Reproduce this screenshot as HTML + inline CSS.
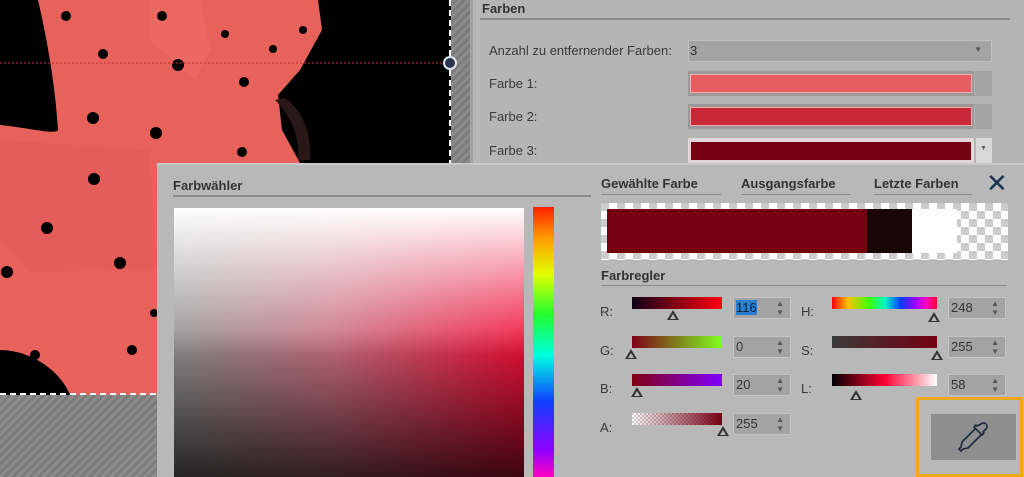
<!DOCTYPE html>
<html><head><meta charset="utf-8"><style>
*{margin:0;padding:0;box-sizing:border-box}
body{width:1024px;height:477px;overflow:hidden;position:relative;background:#b8b8b8;font-family:"Liberation Sans","DejaVu Sans",sans-serif;color:#333}
.a{position:absolute}
.hatch{background:repeating-linear-gradient(135deg,#8c8c8c 0 3px,#7c7c7c 3px 6px)}
.lbl{font-size:13px;color:#3a3a3a}
.b{font-weight:bold;font-size:13px;color:#333}
.ul{height:2px;background:#8a8a8a}
.spin{background:#a3a3a3;border:1px solid #c4c4c4;font-size:13px;color:#333;padding:2px 2px;width:58px;height:22px}
.spin i{position:absolute;right:6px;top:1px;font-style:normal;font-size:8px;line-height:9px;color:#555}
.tri{position:absolute;width:0;height:0;border-left:6px solid transparent;border-right:6px solid transparent;border-bottom:10px solid #333}
.tri:after{content:"";position:absolute;left:-3px;top:4px;border-left:3px solid transparent;border-right:3px solid transparent;border-bottom:5px solid #b8b8b8}
.sl{position:absolute;height:12px}
</style></head><body>
<div class="a hatch" style="left:0;top:0;width:470px;height:477px"></div>
<svg class="a" style="left:0;top:0" width="451" height="395" viewBox="0 0 451 395">
<rect width="451" height="395" fill="#000"/>
<path d="M38 0 L318 0 L322 30 L300 70 L278 95 L282 130 L300 163 L157 163 L157 395 L70 395 C60 370 30 350 0 350 L0 125 C30 128 55 135 58 130 C55 80 45 30 38 0Z" fill="#e8625c"/>
<path d="M150 0 L200 0 L210 50 L195 80 L150 40Z" fill="#ee6e66" opacity=".6"/>
<path d="M0 140 L150 150 L157 270 L30 272 L0 240Z" fill="#e25a55" opacity=".6"/>
<path d="M275 100 C290 115 300 135 298 160 L310 160 C312 130 300 108 285 98Z" fill="#2a1818"/>
<g fill="#000">
<circle cx="66" cy="16" r="5"/><circle cx="162" cy="16" r="5"/><circle cx="103" cy="54" r="5"/><circle cx="178" cy="65" r="6"/><circle cx="244" cy="82" r="5"/><circle cx="225" cy="34" r="4"/><circle cx="273" cy="49" r="4"/><circle cx="303" cy="30" r="4"/><circle cx="93" cy="118" r="6"/><circle cx="156" cy="133" r="6"/><circle cx="242" cy="152" r="5"/><circle cx="94" cy="179" r="6"/><circle cx="47" cy="228" r="6"/><circle cx="120" cy="263" r="6"/><circle cx="7" cy="272" r="6"/><circle cx="35" cy="355" r="5"/><circle cx="132" cy="350" r="5"/><circle cx="154" cy="313" r="4"/></g>
<line x1="0" y1="63" x2="450" y2="63" stroke="#c03030" stroke-dasharray="2 2" stroke-width="1"/>
<line x1="450" y1="0" x2="450" y2="395" stroke="#fff" stroke-dasharray="6 4" stroke-width="2"/>
<line x1="0" y1="394" x2="157" y2="394" stroke="#fff" stroke-dasharray="6 4" stroke-width="2"/>
</svg>
<div class="a" style="left:443px;top:56px;width:14px;height:14px;border-radius:50%;background:#2c3550;border:2px solid #e0e4ea"></div>
<div class="a" style="left:470px;top:0;width:554px;height:163px;background:#b5b5b5;border-left:3px solid #a0a0a0"></div>
<div class="a b" style="left:482px;top:1px">Farben</div>
<div class="a ul" style="left:480px;top:18px;width:530px"></div>
<div class="a lbl" style="left:489px;top:43px">Anzahl zu entfernender Farben:</div>
<div class="a" style="left:688px;top:40px;width:304px;height:22px;background:#a4a4a4;border:1px solid #c2c2c2;font-size:13px;padding:2px 1px">3<span class="a" style="right:9px;top:4px;font-size:8px;color:#555">▼</span></div>
<div class="a lbl" style="left:489px;top:76px">Farbe 1:</div>
<div class="a" style="left:688px;top:71px;width:286px;height:25px;background:#999;padding:3px 2px"><div style="height:19px;background:#e85d5f;border:1px solid #f0b0b0"></div></div>
<div class="a" style="left:975px;top:71px;width:17px;height:25px;background:#a2a2a2"></div>
<div class="a lbl" style="left:489px;top:109px">Farbe 2:</div>
<div class="a" style="left:688px;top:104px;width:286px;height:25px;background:#999;padding:3px 2px"><div style="height:19px;background:#c82838;border:1px solid #f0b0b0"></div></div>
<div class="a" style="left:975px;top:104px;width:17px;height:25px;background:#a2a2a2"></div>
<div class="a lbl" style="left:489px;top:143px">Farbe 3:</div>
<div class="a" style="left:688px;top:138px;width:286px;height:25px;background:#e0d8d8;padding:4px 3px"><div style="height:18px;background:#740010"></div></div>
<div class="a" style="left:976px;top:138px;width:16px;height:25px;background:#d8d8d8"><span class="a" style="left:4px;top:7px;font-size:7px;color:#666">▼</span></div>
<div class="a" style="left:157px;top:163px;width:867px;height:314px;background:#b8b8b8;border-top:2px solid #c8c8c8"></div>
<div class="a b" style="left:173px;top:178px">Farbwähler</div>
<div class="a ul" style="left:173px;top:195px;width:418px"></div>
<div class="a" style="left:174px;top:208px;width:350px;height:269px;background:linear-gradient(to bottom,#fff 0%,rgba(255,255,255,0) 55%),linear-gradient(to bottom,rgba(0,0,0,0) 45%,rgba(0,0,0,.75) 100%),linear-gradient(to right,#909090,#c87080 45%,#f01038)"></div>
<div class="a" style="left:533px;top:207px;width:21px;height:270px;background:linear-gradient(#ff2000,#ffa000 12%,#e0ff00 25%,#20ff30 40%,#00ffe0 55%,#1040ff 72%,#9000ff 90%,#ff00c0)"></div>
<div class="a b" style="left:601px;top:176px">Gewählte Farbe</div>
<div class="a ul" style="left:601px;top:194px;width:120px;height:1px"></div>
<div class="a b" style="left:741px;top:176px">Ausgangsfarbe</div>
<div class="a ul" style="left:741px;top:194px;width:110px;height:1px"></div>
<div class="a b" style="left:874px;top:176px">Letzte Farben</div>
<div class="a ul" style="left:874px;top:194px;width:98px;height:1px"></div>
<div class="a" style="left:986px;top:170px;font-size:26px;font-weight:bold;color:#1a3350;line-height:26px">✕</div>
<div class="a" style="left:601px;top:203px;width:407px;height:57px;background:repeating-conic-gradient(#fff 0 25%,#ccc 0 50%) 0 0/16px 16px"></div>
<div class="a" style="left:607px;top:209px;width:260px;height:44px;background:#740010"></div>
<div class="a" style="left:867px;top:209px;width:45px;height:44px;background:#1a0606"></div>
<div class="a" style="left:912px;top:209px;width:45px;height:44px;background:#fff"></div>
<div class="a b" style="left:601px;top:268px">Farbregler</div>
<div class="a ul" style="left:601px;top:285px;width:406px;height:1px"></div>
<div class="a lbl" style="left:600px;top:304px">R:</div>
<div class="sl" style="left:632px;top:297px;width:90px;background:linear-gradient(to right,#100018,#ff0010)"></div>
<div class="tri" style="left:667px;top:310px"></div>
<div class="a spin" style="left:733px;top:297px"><span style="background:#2a7fd0;color:#123">116</span><i>▲<br>▼</i></div>
<div class="a lbl" style="left:600px;top:343px">G:</div>
<div class="sl" style="left:632px;top:336px;width:90px;background:linear-gradient(to right,#800018,#80ff20)"></div>
<div class="tri" style="left:625px;top:349px"></div>
<div class="a spin" style="left:733px;top:336px">0<i>▲<br>▼</i></div>
<div class="a lbl" style="left:600px;top:381px">B:</div>
<div class="sl" style="left:632px;top:374px;width:90px;background:linear-gradient(to right,#800010,#8000ff)"></div>
<div class="tri" style="left:631px;top:387px"></div>
<div class="a spin" style="left:733px;top:374px">20<i>▲<br>▼</i></div>
<div class="a lbl" style="left:600px;top:420px">A:</div>
<div class="sl" style="left:632px;top:413px;width:90px;background:linear-gradient(to right,rgba(116,0,20,0),#740014),repeating-conic-gradient(#fff 0 25%,#ccc 0 50%) 0 0/4px 4px"></div>
<div class="tri" style="left:717px;top:426px"></div>
<div class="a spin" style="left:733px;top:413px">255<i>▲<br>▼</i></div>
<div class="a lbl" style="left:801px;top:304px">H:</div>
<div class="sl" style="left:832px;top:297px;width:105px;background:linear-gradient(to right,#ff0000,#ffc000 15%,#40ff00 35%,#00ffc0 50%,#0040ff 65%,#a000ff 80%,#ff00c0 90%,#ff0030)"></div>
<div class="tri" style="left:928px;top:312px"></div>
<div class="a spin" style="left:948px;top:297px">248<i>▲<br>▼</i></div>
<div class="a lbl" style="left:801px;top:343px">S:</div>
<div class="sl" style="left:832px;top:336px;width:105px;background:linear-gradient(to right,#3a3a3a,#740010)"></div>
<div class="tri" style="left:931px;top:350px"></div>
<div class="a spin" style="left:948px;top:336px">255<i>▲<br>▼</i></div>
<div class="a lbl" style="left:801px;top:381px">L:</div>
<div class="sl" style="left:832px;top:374px;width:105px;background:linear-gradient(to right,#000,#ff0030 50%,#fff)"></div>
<div class="tri" style="left:850px;top:390px"></div>
<div class="a spin" style="left:948px;top:374px">58<i>▲<br>▼</i></div>
<div class="a" style="left:916px;top:397px;width:107px;height:80px;border:3px solid #f0a818"></div>
<div class="a" style="left:931px;top:414px;width:85px;height:46px;background:#8e8e8e"></div>
<svg class="a" style="left:955px;top:420px" width="36" height="34" viewBox="0 0 36 34"><path d="M26 4 a3 3 0 0 1 5 5 l-3 3 1 1 -2 2 -8 -8 2 -2 1 1z M20 9 L7 22 l-1 5 -2 2 2 2 2-2 5-1 13-13" fill="none" stroke="#1a2a40" stroke-width="1.6" stroke-linejoin="round"/></svg>
</body></html>
